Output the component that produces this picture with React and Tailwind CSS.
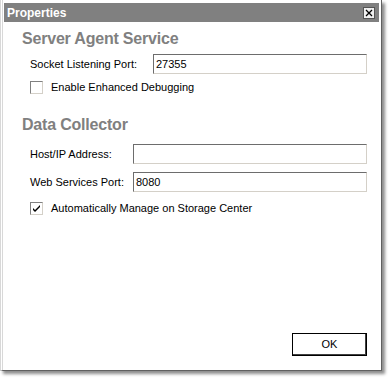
import React from 'react';

const font = { fontFamily: '"Liberation Sans", Arial, sans-serif' };

const Field = ({ label, value, labelWidth }) => (
  <div className="flex items-center h-[20px]">
    <span className="shrink-0 text-[11px] leading-[14px] text-black" style={{ width: labelWidth }}>{label}</span>
    <div className="flex-1 h-[20px] bg-white border border-t-[#6d6d6d] border-l-[#6d6d6d] border-r-[#d4d0c8] border-b-[#d4d0c8] flex items-center px-[2px] text-[11px] text-black">
      {value}
    </div>
  </div>
);

const Checkbox = ({ checked, label }) => (
  <div className="flex items-center gap-[8px] h-[14px]">
    <div className="w-[13px] h-[13px] bg-white border border-t-[#808080] border-l-[#808080] border-r-[#d4d0c8] border-b-[#d4d0c8] flex items-center justify-center">
      {checked && (
        <svg width="9" height="9" viewBox="0 0 9 9">
          <path d="M1 4 L3 6 L8 1 L8 3 L3 8 L1 6 Z" fill="#000" />
        </svg>
      )}
    </div>
    <span className="text-[11px] leading-[14px] text-black">{label}</span>
  </div>
);

export default function App() {
  return (
    <div className="w-[389px] h-[380px] bg-white relative" style={font}>
      <div className="w-[382px] h-[371px] bg-white border-l-[3px] border-[#d8d8d8] border-double flex flex-col shadow-[3px_3px_3px_rgba(0,0,0,0.45)] border-r border-b border-r-[#606060] border-b-[#606060]">
        <div className="mt-[3px] ml-[1px] mr-[2px] h-[19px] bg-[#808080] flex items-center justify-between pl-[3px] pr-[4px]">
          <span className="text-white font-bold text-[12px]">Properties</span>
          <div className="w-[12px] h-[12px] bg-[#f0f0f0] border border-[#555] flex items-center justify-center">
            <svg width="8" height="8" viewBox="0 0 8 8">
              <path d="M1 1 L7 7 M7 1 L1 7" stroke="#000" strokeWidth="1.3" />
            </svg>
          </div>
        </div>
        <div className="flex-1 flex flex-col pl-[19px] pr-[14px]">
          <h2 className="mt-[7px] text-[16px] tracking-[-0.2px] font-bold text-[#808080] leading-[20px]">Server Agent Service</h2>
          <div className="mt-[5px] ml-[8px] flex flex-col gap-[6px]">
            <Field label="Socket Listening Port:" value="27355" labelWidth={123} />
            <Checkbox label="Enable Enhanced Debugging" />
          </div>
          <h2 className="mt-[21px] text-[16px] tracking-[-0.2px] font-bold text-[#808080] leading-[20px]">Data Collector</h2>
          <div className="mt-[9px] ml-[8px] flex flex-col">
            <Field label="Host/IP Address:" value="" labelWidth={103} />
            <div className="mt-[8px]">
              <Field label="Web Services Port:" value="8080" labelWidth={103} />
            </div>
            <div className="mt-[9px]">
              <Checkbox checked label="Automatically Manage on Storage Center" />
            </div>
          </div>
          <div className="flex-1" />
          <div className="flex justify-end mb-[14px]">
            <button className="w-[75px] h-[23px] bg-white border border-black shadow-[inset_-1px_-1px_0_#404040] text-[11px] text-black">OK</button>
          </div>
        </div>
      </div>
    </div>
  );
}
